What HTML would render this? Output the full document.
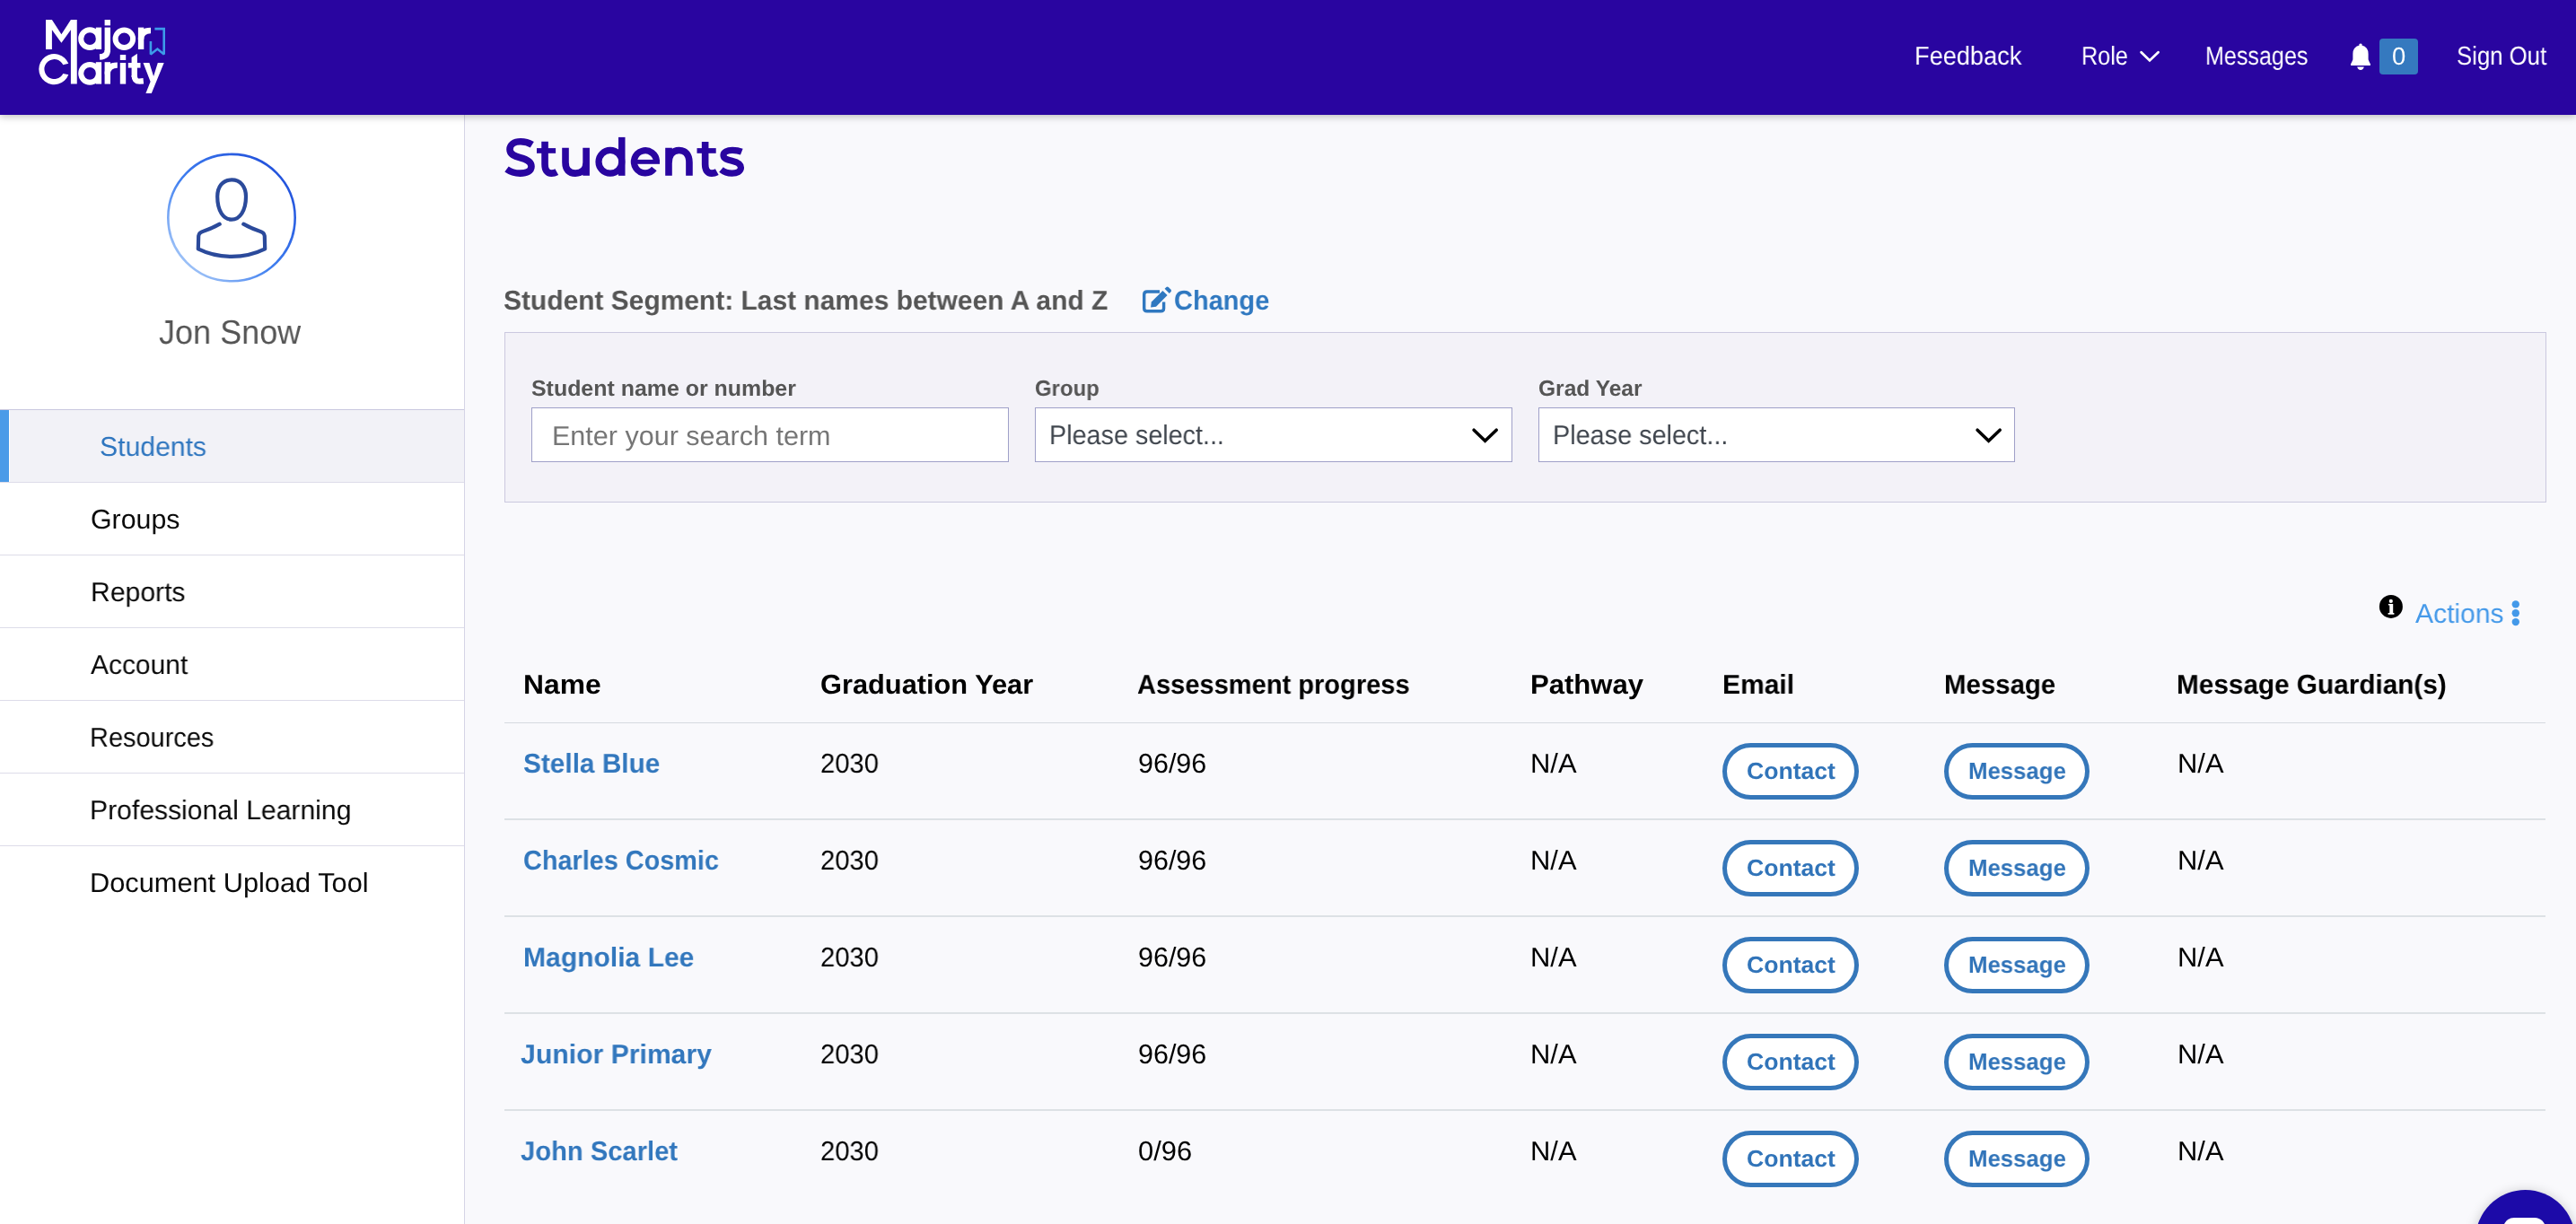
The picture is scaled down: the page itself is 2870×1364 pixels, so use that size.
<!DOCTYPE html>
<html><head><meta charset="utf-8">
<style>
html,body{margin:0;padding:0;}
body{width:2870px;height:1364px;overflow:hidden;position:relative;background:#f9f9fc;font-family:"Liberation Sans",sans-serif;}
.abs{position:absolute;}
.t{position:absolute;line-height:1;white-space:nowrap;transform-origin:0 0;will-change:transform;text-rendering:geometricPrecision;}
#hdr{left:0;top:0;width:2870px;height:128px;background:#2905a0;box-shadow:0 2px 8px rgba(0,0,0,0.25);z-index:5;}
#side{left:0;top:128px;width:517px;height:1236px;background:#fff;border-right:1px solid #d5d4e6;}
.nl{position:absolute;left:0;width:517px;height:1px;background:#dddce9;}
.box{position:absolute;background:#f3f2f8;border:1px solid #cbc9df;box-sizing:border-box;}
.inp{position:absolute;background:#fff;border:1px solid #9fa0c8;box-sizing:border-box;}
.rl{position:absolute;left:562px;width:2274px;height:2px;background:#dde1e5;}
.btn{position:absolute;border:5px solid #3577ba;border-radius:40px;box-sizing:border-box;background:#fff;}
</style></head><body>
<div id="hdr" class="abs">
<svg class="abs" style="left:0;top:0" width="200" height="127" viewBox="0 0 200 127">
 <g fill="#fff">
  <path d="M51 55 L51 22 L57.9 22 L68.4 38.3 L78.9 22 L85.75 22 L85.75 93.6 L78.9 93.6 L78.9 33.2 L68.4 47.7 L57.9 33.2 L57.9 55 Z"/>
 </g>
 <g fill="none" stroke="#fff" stroke-width="6.0">
  <circle cx="100.1" cy="43.2" r="9.9"/>
  <circle cx="138.35" cy="43.25" r="9.75"/>
  <circle cx="100.1" cy="81.85" r="9.9"/>
 </g>
 <g fill="#fff">
  <rect x="106.8" y="30.6" width="6.3" height="24.4"/>
  <rect x="106.8" y="69.2" width="6.3" height="24.4"/>
  <rect x="116.6" y="22" width="6.4" height="6.4"/>
  <rect x="116.6" y="30.6" width="6.4" height="27"/>
  <rect x="153.9" y="30.6" width="6.4" height="24.4"/>
  <rect x="116.6" y="69.2" width="6.4" height="24.4"/>
  <rect x="133.8" y="61" width="6.4" height="6"/>
  <rect x="133.8" y="70" width="6.4" height="23.6"/>
  <path d="M146.6 64 L152.9 59.7 L152.9 86 L146.6 86 Z"/>
  <rect x="142.8" y="70" width="13.7" height="5.6"/>
 </g>
 <g fill="none" stroke="#fff" stroke-width="6.4">
  <path d="M119.8 56 Q119.8 63 111 63.5"/>
  <path d="M157 44 Q157 34 168 34"/>
  <path d="M119.8 82.6 Q119.8 72.6 130.8 72.6"/>
  <path d="M149.75 84 C149.75 88.5 151.5 90.6 155.5 90.6 L159.8 90.2"/>
 </g>
 <path fill="#fff" d="M76.31 70.83 A17.1 17.1 0 1 0 76.31 83.37 L70.29 81.92 A11 11 0 1 1 70.29 72.28 Z"/>
 <path fill="#fff" d="M159.5 70 L166.4 70 L171.1 85 L175.8 70 L182.7 70 L168.8 103.9 L162.4 103.9 L167.6 91 Z"/>
 <path fill="none" stroke="#3d9be9" stroke-width="2.6" stroke-miterlimit="2" d="M172.4 32.1 L182.7 32.1 L182.7 60.6 L175.4 54.6 L167.9 60.6 L167.9 46"/>
</svg>
<svg class="abs" style="left:2380px;top:52px" width="30" height="22" viewBox="0 0 30 22"><path d="M5.6 6.3 L15 15.4 L24.6 6.3" fill="none" stroke="#fff" stroke-width="2.8" stroke-linecap="round"/></svg>
<svg class="abs" style="left:2615px;top:46px" width="30" height="35" viewBox="0 0 30 35">
 <path fill="#fff" d="M13.5 3 Q15 1.8 16.5 3 L16.5 4.6 Q23.5 6.5 23.6 14 L23.6 20.3 Q24.5 23 26 25.5 Q26.5 27 25 27 L5 27 Q3.5 27 4 25.5 Q5.5 23 6.4 20.3 L6.4 14 Q6.5 6.5 13.5 4.6 Z"/>
 <path fill="#fff" d="M11.2 28.6 L18.8 28.6 Q18 32 15 32 Q12 32 11.2 28.6 Z"/>
</svg>
<div class="abs" style="left:2651px;top:43px;width:43px;height:40px;background:#3579bf;border-radius:4px;"></div>
</div>
<div id="side" class="abs"></div>
<svg class="abs" style="left:180px;top:165px" width="160" height="160" viewBox="180 165 160 160">
 <defs><linearGradient id="ag" x1="1" y1="0" x2="0" y2="1"><stop offset="0" stop-color="#1a45d6"/><stop offset="0.55" stop-color="#3f7ff0"/><stop offset="1" stop-color="#c4ddfa"/></linearGradient></defs>
 <circle cx="258" cy="242.6" r="70.7" fill="none" stroke="url(#ag)" stroke-width="2.6"/>
 <g fill="none" stroke="#2b4a9b" stroke-width="4.2" stroke-linecap="round" stroke-linejoin="round">
  <path d="M258.1 200.4 C268 200.4 274 208 274 219 C274 235 267 244.6 258.1 244.6 C249 244.6 242.2 235 242.2 219 C242.2 208 248 200.4 258.1 200.4 Z"/>
  <path d="M244.7 249.7 C238 253.5 232 256 227.1 257.4 Q221.5 259 221.2 263 L220.8 277.4 Q238 285.9 258 285.9 Q278 285.9 295.2 277.4 L294.8 263 Q294.5 259 288.9 257.4 C284 256 278 253.5 271.3 249.7"/>
 </g>
</svg>
<div class="abs" style="left:11px;top:456px;width:506px;height:81px;background:#f2f2f7;"></div>
<div class="abs" style="left:0;top:456px;width:10px;height:81px;background:#4a9be8;"></div>
<div class="nl" style="top:456px;background:#c9c8df"></div>
<div class="nl" style="top:537px"></div>
<div class="nl" style="top:618px"></div>
<div class="nl" style="top:699px"></div>
<div class="nl" style="top:780px"></div>
<div class="nl" style="top:861px"></div>
<div class="nl" style="top:942px"></div>

<div class="box" style="left:562px;top:370px;width:2275px;height:190px;"></div>
<div class="inp" style="left:592px;top:454px;width:532px;height:61px;"></div>
<div class="inp" style="left:1153px;top:454px;width:532px;height:61px;"></div>
<div class="inp" style="left:1714px;top:454px;width:531px;height:61px;"></div>
<svg class="abs" style="left:1636px;top:470px" width="40" height="30" viewBox="0 0 40 30"><path d="M6.1 9.2 L18.6 21.2 L31.2 9.2" fill="none" stroke="#000" stroke-width="3.6" stroke-linecap="round"/></svg>
<svg class="abs" style="left:2197px;top:470px" width="40" height="30" viewBox="0 0 40 30"><path d="M6.1 9.2 L18.6 21.2 L31.2 9.2" fill="none" stroke="#000" stroke-width="3.6" stroke-linecap="round"/></svg>

<svg class="abs" style="left:1268px;top:315px" width="42" height="38" viewBox="1268 315 42 38">
 <path fill="none" stroke="#2f78c0" stroke-width="3.4" d="M1292 325 L1278 325 Q1274.7 325 1274.7 328.3 L1274.7 343.5 Q1274.7 346.8 1278 346.8 L1293.3 346.8 Q1296.6 346.8 1296.6 343.5 L1296.6 336.5"/>
 <path fill="#2f78c0" d="M1282.8 336.5 L1295.4 323.9 L1300.6 329.1 L1288 341.7 L1282.1 342.6 Z"/>
 <path fill="#2f78c0" d="M1297.6 321.7 L1299.4 319.9 Q1300.6 318.9 1301.8 319.9 L1304.6 322.7 Q1305.6 323.9 1304.6 325.1 L1302.8 326.9 Z"/>
</svg>

<svg class="abs" style="left:2648px;top:660px" width="32" height="32" viewBox="2648 660 32 32">
 <circle cx="2663.9" cy="675.9" r="13" fill="#000"/>
 <circle cx="2663.8" cy="669.9" r="2.1" fill="#fff"/>
 <path fill="#fff" d="M2660.9 673 L2666.2 673 L2666.2 683 L2667.4 683 L2667.4 684.7 L2660.6 684.7 L2660.6 683 L2662.3 683 L2662.3 674.6 L2660.9 674.6 Z"/>
</svg>
<svg class="abs" style="left:2796px;top:666px" width="14" height="32" viewBox="2796 666 14 32" fill="#4499e9">
 <circle cx="2802.8" cy="673.4" r="4.2"/><circle cx="2802.8" cy="683.3" r="4.2"/><circle cx="2802.8" cy="693.1" r="4.2"/>
</svg>

<div class="rl" style="top:805px;height:1px;background:#d6dae0"></div>
<div class="rl" style="top:912px"></div>
<div class="rl" style="top:1020px"></div>
<div class="rl" style="top:1128px"></div>
<div class="rl" style="top:1236px"></div>

<div class="btn" style="left:1919px;top:828px;width:152px;height:63px;"></div>
<div class="btn" style="left:2166px;top:828px;width:162px;height:63px;"></div>
<div class="btn" style="left:1919px;top:936px;width:152px;height:63px;"></div>
<div class="btn" style="left:2166px;top:936px;width:162px;height:63px;"></div>
<div class="btn" style="left:1919px;top:1044px;width:152px;height:63px;"></div>
<div class="btn" style="left:2166px;top:1044px;width:162px;height:63px;"></div>
<div class="btn" style="left:1919px;top:1152px;width:152px;height:63px;"></div>
<div class="btn" style="left:2166px;top:1152px;width:162px;height:63px;"></div>
<div class="btn" style="left:1919px;top:1260px;width:152px;height:63px;"></div>
<div class="btn" style="left:2166px;top:1260px;width:162px;height:63px;"></div>

<svg class="abs" style="left:550px;top:145px" width="290" height="60" viewBox="550 145 290 60">
 <g fill="none" stroke="#2905a0" stroke-width="7.6">
  <path d="M592.8 161.3 C589 158.9 584.5 157.75 580 157.75 C572.5 157.75 568 161.5 568 166.5 C568 172 573 174 579.7 175.7 C587.5 177.7 592 180.5 592 185.5 C592 190.5 587 193.1 579.5 193.1 C573.5 193.1 568 191 564.5 188.5"/>
  <path d="M607.05 157.8 L607.05 183 C607.05 189.5 609.5 193.1 614.5 193.1 C616.5 193.1 618.5 192.6 620.3 191.6"/>
  <path d="M630 164.8 L630 181 C630 189 634 193.1 641 193.1 C648.5 193.1 653.1 188 653.1 181 M653.1 164.8 L653.1 195.8"/>
  <circle cx="679.9" cy="180.3" r="12.9" stroke-width="7.2"/>
  <path d="M745 164.8 L745 195.8 M745 182 C745 172.5 750 167.55 756.5 167.55 C764 167.55 767.95 173 767.95 181 L767.95 195.8"/>
  <path d="M785.65 158 L785.65 183 C785.65 189.5 788.1 193.1 793 193.1 C795 193.1 797 192.6 798.8 191.6"/>
  <path stroke-width="7.2" d="M826.3 169.2 C823 167.9 819.5 167.45 816 167.45 C810 167.45 806 169.5 806 173 C806 176.8 810 178 815.5 179.3 C821.5 180.7 825.45 182.5 825.45 186.8 C825.45 191 821 193.1 815.5 193.1 C810.5 193.1 806.5 191.5 803.5 189"/>
  <path stroke-width="7.2" d="M731.5 180.35 A12.55 12.55 0 1 0 728.84 188.08"/>
 </g>
 <g fill="#2905a0">
  <rect x="689" y="152.9" width="7.5" height="42.9"/>
  <rect x="598" y="165.1" width="21.1" height="5.7"/>
  <rect x="776.5" y="165.1" width="21.2" height="5.7"/>
  <rect x="706.5" y="177.9" width="28.5" height="4.9"/>
 </g>
</svg>
<div class="t" style="left:2132.72px;top:49px;font-size:28.9px;font-weight:400;color:#fff;z-index:9;transform:scaleX(0.9408);">Feedback</div>
<div class="t" style="left:2318.55px;top:49px;font-size:28.9px;font-weight:400;color:#fff;z-index:9;transform:scaleX(0.8732);">Role</div>
<div class="t" style="left:2456.56px;top:49px;font-size:28.9px;font-weight:400;color:#fff;z-index:9;transform:scaleX(0.8690);">Messages</div>
<div class="t" style="left:2736.71px;top:49px;font-size:28.9px;font-weight:400;color:#fff;z-index:9;transform:scaleX(0.8910);">Sign Out</div>
<div class="t" style="left:2664.83px;top:49px;font-size:27.45px;font-weight:400;color:#fff;z-index:9;transform:scaleX(0.9692);">0</div>
<div class="t" style="left:176.94px;top:352px;font-size:37.65px;font-weight:400;color:#555;transform:scaleX(0.9573);">Jon Snow</div>
<div class="t" style="left:111.41px;top:484px;font-size:30.35px;font-weight:400;color:#2f76bf;transform:scaleX(0.9941);">Students</div>
<div class="t" style="left:101.10px;top:565px;font-size:30.35px;font-weight:400;color:#0a0a0a;">Groups</div>
<div class="t" style="left:100.61px;top:646px;font-size:30.35px;font-weight:400;color:#0a0a0a;transform:scaleX(0.9932);">Reports</div>
<div class="t" style="left:100.60px;top:727px;font-size:30.35px;font-weight:400;color:#0a0a0a;transform:scaleX(0.9873);">Account</div>
<div class="t" style="left:100.49px;top:808px;font-size:30.35px;font-weight:400;color:#0a0a0a;transform:scaleX(0.9542);">Resources</div>
<div class="t" style="left:100.41px;top:889px;font-size:30.35px;font-weight:400;color:#0a0a0a;transform:scaleX(0.9928);">Professional Learning</div>
<div class="t" style="left:100.37px;top:970px;font-size:30.35px;font-weight:400;color:#0a0a0a;transform:scaleX(1.0135);">Document Upload Tool</div>
<div class="t" style="left:561.21px;top:321px;font-size:30.35px;font-weight:700;color:#555;transform:scaleX(0.9869);">Student Segment: Last names between A and Z</div>
<div class="t" style="left:1307.84px;top:321px;font-size:30.35px;font-weight:700;color:#2f78c0;transform:scaleX(0.9550);">Change</div>
<div class="t" style="left:591.98px;top:422px;font-size:24.55px;font-weight:700;color:#555;transform:scaleX(1.0152);">Student name or number</div>
<div class="t" style="left:1153.03px;top:422px;font-size:24.55px;font-weight:700;color:#555;transform:scaleX(0.9736);">Group</div>
<div class="t" style="left:1713.60px;top:422px;font-size:24.55px;font-weight:700;color:#555;">Grad Year</div>
<div class="t" style="left:615.49px;top:472px;font-size:30.35px;font-weight:400;color:#767676;transform:scaleX(1.0062);">Enter your search term</div>
<div class="t" style="left:1169.01px;top:471px;font-size:30.35px;font-weight:400;color:#40464e;transform:scaleX(0.9473);">Please select...</div>
<div class="t" style="left:1729.50px;top:471px;font-size:30.35px;font-weight:400;color:#40464e;transform:scaleX(0.9493);">Please select...</div>
<div class="t" style="left:2691.40px;top:670px;font-size:30.35px;font-weight:400;color:#4499e9;transform:scaleX(0.9908);">Actions</div>
<div class="t" style="left:583.11px;top:749px;font-size:30.35px;font-weight:700;color:#000;transform:scaleX(1.0475);">Name</div>
<div class="t" style="left:913.69px;top:749px;font-size:30.35px;font-weight:700;color:#000;transform:scaleX(1.0142);">Graduation Year</div>
<div class="t" style="left:1267.24px;top:749px;font-size:30.35px;font-weight:700;color:#000;transform:scaleX(0.9575);">Assessment progress</div>
<div class="t" style="left:1704.75px;top:749px;font-size:30.35px;font-weight:700;color:#000;transform:scaleX(1.0240);">Pathway</div>
<div class="t" style="left:1918.52px;top:749px;font-size:30.35px;font-weight:700;color:#000;transform:scaleX(0.9896);">Email</div>
<div class="t" style="left:2165.96px;top:749px;font-size:30.35px;font-weight:700;color:#000;transform:scaleX(0.9688);">Message</div>
<div class="t" style="left:2424.74px;top:749px;font-size:30.35px;font-weight:700;color:#000;transform:scaleX(0.9799);">Message Guardian(s)</div>
<div class="t" style="left:583.02px;top:837px;font-size:30.35px;font-weight:700;color:#3277bd;transform:scaleX(0.9817);">Stella Blue</div>
<div class="t" style="left:913.74px;top:837px;font-size:30.35px;font-weight:400;color:#000;transform:scaleX(0.9606);">2030</div>
<div class="t" style="left:1267.90px;top:837px;font-size:30.35px;font-weight:400;color:#000;transform:scaleX(1.0041);">96/96</div>
<div class="t" style="left:1704.76px;top:837px;font-size:30.35px;font-weight:400;color:#000;transform:scaleX(1.0188);">N/A</div>
<div class="t" style="left:2425.56px;top:837px;font-size:30.35px;font-weight:400;color:#000;transform:scaleX(1.0188);">N/A</div>
<div class="t" style="left:1945.58px;top:846px;font-size:26px;font-weight:700;color:#3174b9;transform:scaleX(1.0221);">Contact</div>
<div class="t" style="left:2192.72px;top:846px;font-size:26px;font-weight:700;color:#3174b9;transform:scaleX(0.9907);">Message</div>
<div class="t" style="left:583.45px;top:945px;font-size:30.35px;font-weight:700;color:#3277bd;transform:scaleX(0.9502);">Charles Cosmic</div>
<div class="t" style="left:913.74px;top:945px;font-size:30.35px;font-weight:400;color:#000;transform:scaleX(0.9606);">2030</div>
<div class="t" style="left:1267.90px;top:945px;font-size:30.35px;font-weight:400;color:#000;transform:scaleX(1.0041);">96/96</div>
<div class="t" style="left:1704.76px;top:945px;font-size:30.35px;font-weight:400;color:#000;transform:scaleX(1.0188);">N/A</div>
<div class="t" style="left:2425.56px;top:945px;font-size:30.35px;font-weight:400;color:#000;transform:scaleX(1.0188);">N/A</div>
<div class="t" style="left:1945.58px;top:954px;font-size:26px;font-weight:700;color:#3174b9;transform:scaleX(1.0221);">Contact</div>
<div class="t" style="left:2192.72px;top:954px;font-size:26px;font-weight:700;color:#3174b9;transform:scaleX(0.9907);">Message</div>
<div class="t" style="left:583.42px;top:1053px;font-size:30.35px;font-weight:700;color:#3277bd;transform:scaleX(0.9905);">Magnolia Lee</div>
<div class="t" style="left:913.74px;top:1053px;font-size:30.35px;font-weight:400;color:#000;transform:scaleX(0.9606);">2030</div>
<div class="t" style="left:1267.90px;top:1053px;font-size:30.35px;font-weight:400;color:#000;transform:scaleX(1.0041);">96/96</div>
<div class="t" style="left:1704.76px;top:1053px;font-size:30.35px;font-weight:400;color:#000;transform:scaleX(1.0188);">N/A</div>
<div class="t" style="left:2425.56px;top:1053px;font-size:30.35px;font-weight:400;color:#000;transform:scaleX(1.0188);">N/A</div>
<div class="t" style="left:1945.58px;top:1062px;font-size:26px;font-weight:700;color:#3174b9;transform:scaleX(1.0221);">Contact</div>
<div class="t" style="left:2192.72px;top:1062px;font-size:26px;font-weight:700;color:#3174b9;transform:scaleX(0.9907);">Message</div>
<div class="t" style="left:580.11px;top:1161px;font-size:30.35px;font-weight:700;color:#3277bd;transform:scaleX(0.9944);">Junior Primary</div>
<div class="t" style="left:913.74px;top:1161px;font-size:30.35px;font-weight:400;color:#000;transform:scaleX(0.9606);">2030</div>
<div class="t" style="left:1267.90px;top:1161px;font-size:30.35px;font-weight:400;color:#000;transform:scaleX(1.0041);">96/96</div>
<div class="t" style="left:1704.76px;top:1161px;font-size:30.35px;font-weight:400;color:#000;transform:scaleX(1.0188);">N/A</div>
<div class="t" style="left:2425.56px;top:1161px;font-size:30.35px;font-weight:400;color:#000;transform:scaleX(1.0188);">N/A</div>
<div class="t" style="left:1945.58px;top:1170px;font-size:26px;font-weight:700;color:#3174b9;transform:scaleX(1.0221);">Contact</div>
<div class="t" style="left:2192.72px;top:1170px;font-size:26px;font-weight:700;color:#3174b9;transform:scaleX(0.9907);">Message</div>
<div class="t" style="left:580.14px;top:1269px;font-size:30.35px;font-weight:700;color:#3277bd;transform:scaleX(0.9608);">John Scarlet</div>
<div class="t" style="left:913.74px;top:1269px;font-size:30.35px;font-weight:400;color:#000;transform:scaleX(0.9606);">2030</div>
<div class="t" style="left:1267.88px;top:1269px;font-size:30.35px;font-weight:400;color:#000;transform:scaleX(1.0175);">0/96</div>
<div class="t" style="left:1704.76px;top:1269px;font-size:30.35px;font-weight:400;color:#000;transform:scaleX(1.0188);">N/A</div>
<div class="t" style="left:2425.56px;top:1269px;font-size:30.35px;font-weight:400;color:#000;transform:scaleX(1.0188);">N/A</div>
<div class="t" style="left:1945.58px;top:1278px;font-size:26px;font-weight:700;color:#3174b9;transform:scaleX(1.0221);">Contact</div>
<div class="t" style="left:2192.72px;top:1278px;font-size:26px;font-weight:700;color:#3174b9;transform:scaleX(0.9907);">Message</div>

<div class="abs" style="left:2757.5px;top:1326px;width:111px;height:111px;border-radius:50%;background:#1c0aa8;box-shadow:0 2px 14px rgba(0,0,0,0.22);z-index:6;"></div>
<div class="abs" style="left:2789px;top:1357px;width:47px;height:30px;border-radius:12px;background:#fff;z-index:7;"></div>
</body></html>
